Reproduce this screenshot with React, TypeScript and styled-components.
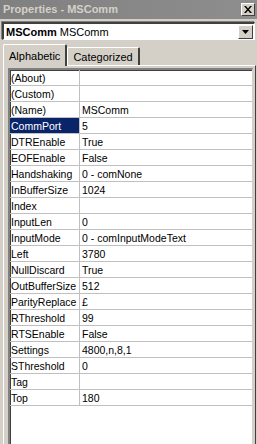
import React from "react";
import styled, {createGlobalStyle} from "styled-components";

const GlobalStyle = createGlobalStyle`
  html, body {
    margin: 0;
    padding: 0;
    background: #d4d0c8;
  }
  body {
    font-family: "Liberation Sans", Arial, sans-serif;
    font-size: 10.5px;
    color: #000;
  }
`

const props: {name: string, value: string}[] = [
    {name: '(About)', value: ''},
    {name: '(Custom)', value: ''},
    {name: '(Name)', value: 'MSComm'},
    {name: 'CommPort', value: '5'},
    {name: 'DTREnable', value: 'True'},
    {name: 'EOFEnable', value: 'False'},
    {name: 'Handshaking', value: '0 - comNone'},
    {name: 'InBufferSize', value: '1024'},
    {name: 'Index', value: ''},
    {name: 'InputLen', value: '0'},
    {name: 'InputMode', value: '0 - comInputModeText'},
    {name: 'Left', value: '3780'},
    {name: 'NullDiscard', value: 'True'},
    {name: 'OutBufferSize', value: '512'},
    {name: 'ParityReplace', value: '£'},
    {name: 'RThreshold', value: '99'},
    {name: 'RTSEnable', value: 'False'},
    {name: 'Settings', value: '4800,n,8,1'},
    {name: 'SThreshold', value: '0'},
    {name: 'Tag', value: ''},
    {name: 'Top', value: '180'},
]

export default function App() {
    const selected = 'CommPort'
    return (
        <>
            <GlobalStyle/>
            <Window>
                <TitleBar>
                    <TitleText>Properties - MSComm</TitleText>
                    <CloseButton>
                        <svg width="8" height="7" viewBox="0 0 8 7">
                            <path d="M0 0h2l2 2.5L6 0h2L5 3.5 8 7H6L4 4.5 2 7H0l3-3.5z" fill="#000"/>
                        </svg>
                    </CloseButton>
                </TitleBar>
                <Combo>
                    <ComboText><b>MSComm</b> MSComm</ComboText>
                    <DropButton>
                        <svg width="7" height="4" viewBox="0 0 7 4">
                            <path d="M0 0h7L3.5 4z" fill="#000"/>
                        </svg>
                    </DropButton>
                </Combo>
                <Tabs>
                    <Tab active>Alphabetic</Tab>
                    <Tab>Categorized</Tab>
                </Tabs>
                <TabPanel>
                    <Grid>
                        {props.map(p => (
                            <Row key={p.name}>
                                <NameCell selected={p.name === selected}>{p.name}</NameCell>
                                <ValueCell>{p.value}</ValueCell>
                            </Row>
                        ))}
                    </Grid>
                </TabPanel>
            </Window>
        </>
    )
}

const Window = styled.div`
  width: 257px;
  height: 444px;
  display: flex;
  flex-direction: column;
  background: #d4d0c8;
  overflow: hidden;
`
const TitleBar = styled.div`
  height: 19px;
  display: flex;
  align-items: center;
  justify-content: space-between;
  padding: 0 2px 0 3px;
  background: linear-gradient(90deg, #808080, #8e8e8e);
`
const TitleText = styled.span`
  color: #d4d0c8;
  font-weight: bold;
  font-size: 11px;
  margin-top: -1px;
`
const CloseButton = styled.div`
  width: 12px;
  height: 11px;
  display: flex;
  align-items: center;
  justify-content: center;
  background: #d4d0c8;
  border-top: 1px solid #fff;
  border-left: 1px solid #fff;
  border-right: 1px solid #404040;
  border-bottom: 1px solid #404040;
`
const Combo = styled.div`
  margin: 3px 2px 0 2px;
  height: 18px;
  box-sizing: border-box;
  display: flex;
  align-items: center;
  justify-content: space-between;
  background: #fff;
  border-top: 2px solid #404040;
  border-left: 2px solid #404040;
  border-right: 1px solid #fff;
  border-bottom: 1px solid #fff;
  box-shadow: -1px -1px 0 #808080, 1px 1px 0 #d4d0c8;
  font-size: 11px;
`
const ComboText = styled.span`
  padding-left: 2px;
  b {
    font-weight: bold;
  }
`
const DropButton = styled.div`
  width: 13px;
  height: 12px;
  margin-right: 1px;
  display: flex;
  align-items: center;
  justify-content: center;
  background: #d4d0c8;
  border-top: 1px solid #fff;
  border-left: 1px solid #fff;
  border-right: 1px solid #404040;
  border-bottom: 1px solid #404040;
`
const Tabs = styled.div`
  display: flex;
  align-items: flex-end;
  margin-top: 4px;
  padding-left: 3px;
  height: 21px;
`
const Tab = styled.div<{active?: boolean}>`
  height: ${p => p.active ? 22 : 18}px;
  box-sizing: border-box;
  display: flex;
  align-items: center;
  padding: 0 5px;
  background: #d4d0c8;
  border-top: 1px solid #fff;
  border-left: 1px solid #fff;
  border-right: 2px solid #404040;
  border-radius: 2px 2px 0 0;
  position: relative;
  z-index: ${p => p.active ? 1 : 0};
  margin-bottom: ${p => p.active ? -1 : 0}px;
  font-size: 11px;
`
const TabPanel = styled.div`
  flex: 1;
  display: flex;
  margin: 0 1px 0 3px;
  padding: 2px 2px 0 4px;
  border-top: 1px solid #fff;
  border-left: 1px solid #fff;
  border-right: 1px solid #404040;
`
const Grid = styled.div`
  flex: 1;
  background: #fff;
  border-top: 2px solid #808080;
  border-left: 2px solid #808080;
  border-right: 1px solid #d4d0c8;
  box-shadow: inset 1px 1px 0 #404040;
`
const Row = styled.div`
  height: 16px;
  box-sizing: border-box;
  display: flex;
  border-bottom: 1px solid #c0c0c0;
`
const NameCell = styled.div<{selected?: boolean}>`
  width: 70px;
  flex: none;
  display: flex;
  align-items: center;
  padding-left: 1px;
  box-sizing: border-box;
  border-right: 1px solid #c0c0c0;
  background: ${p => p.selected ? '#0a246a' : 'transparent'};
  color: ${p => p.selected ? '#fff' : '#000'};
  white-space: nowrap;
  overflow: hidden;
`
const ValueCell = styled.div`
  flex: 1;
  display: flex;
  align-items: center;
  padding-left: 2px;
  white-space: nowrap;
  overflow: hidden;
`
